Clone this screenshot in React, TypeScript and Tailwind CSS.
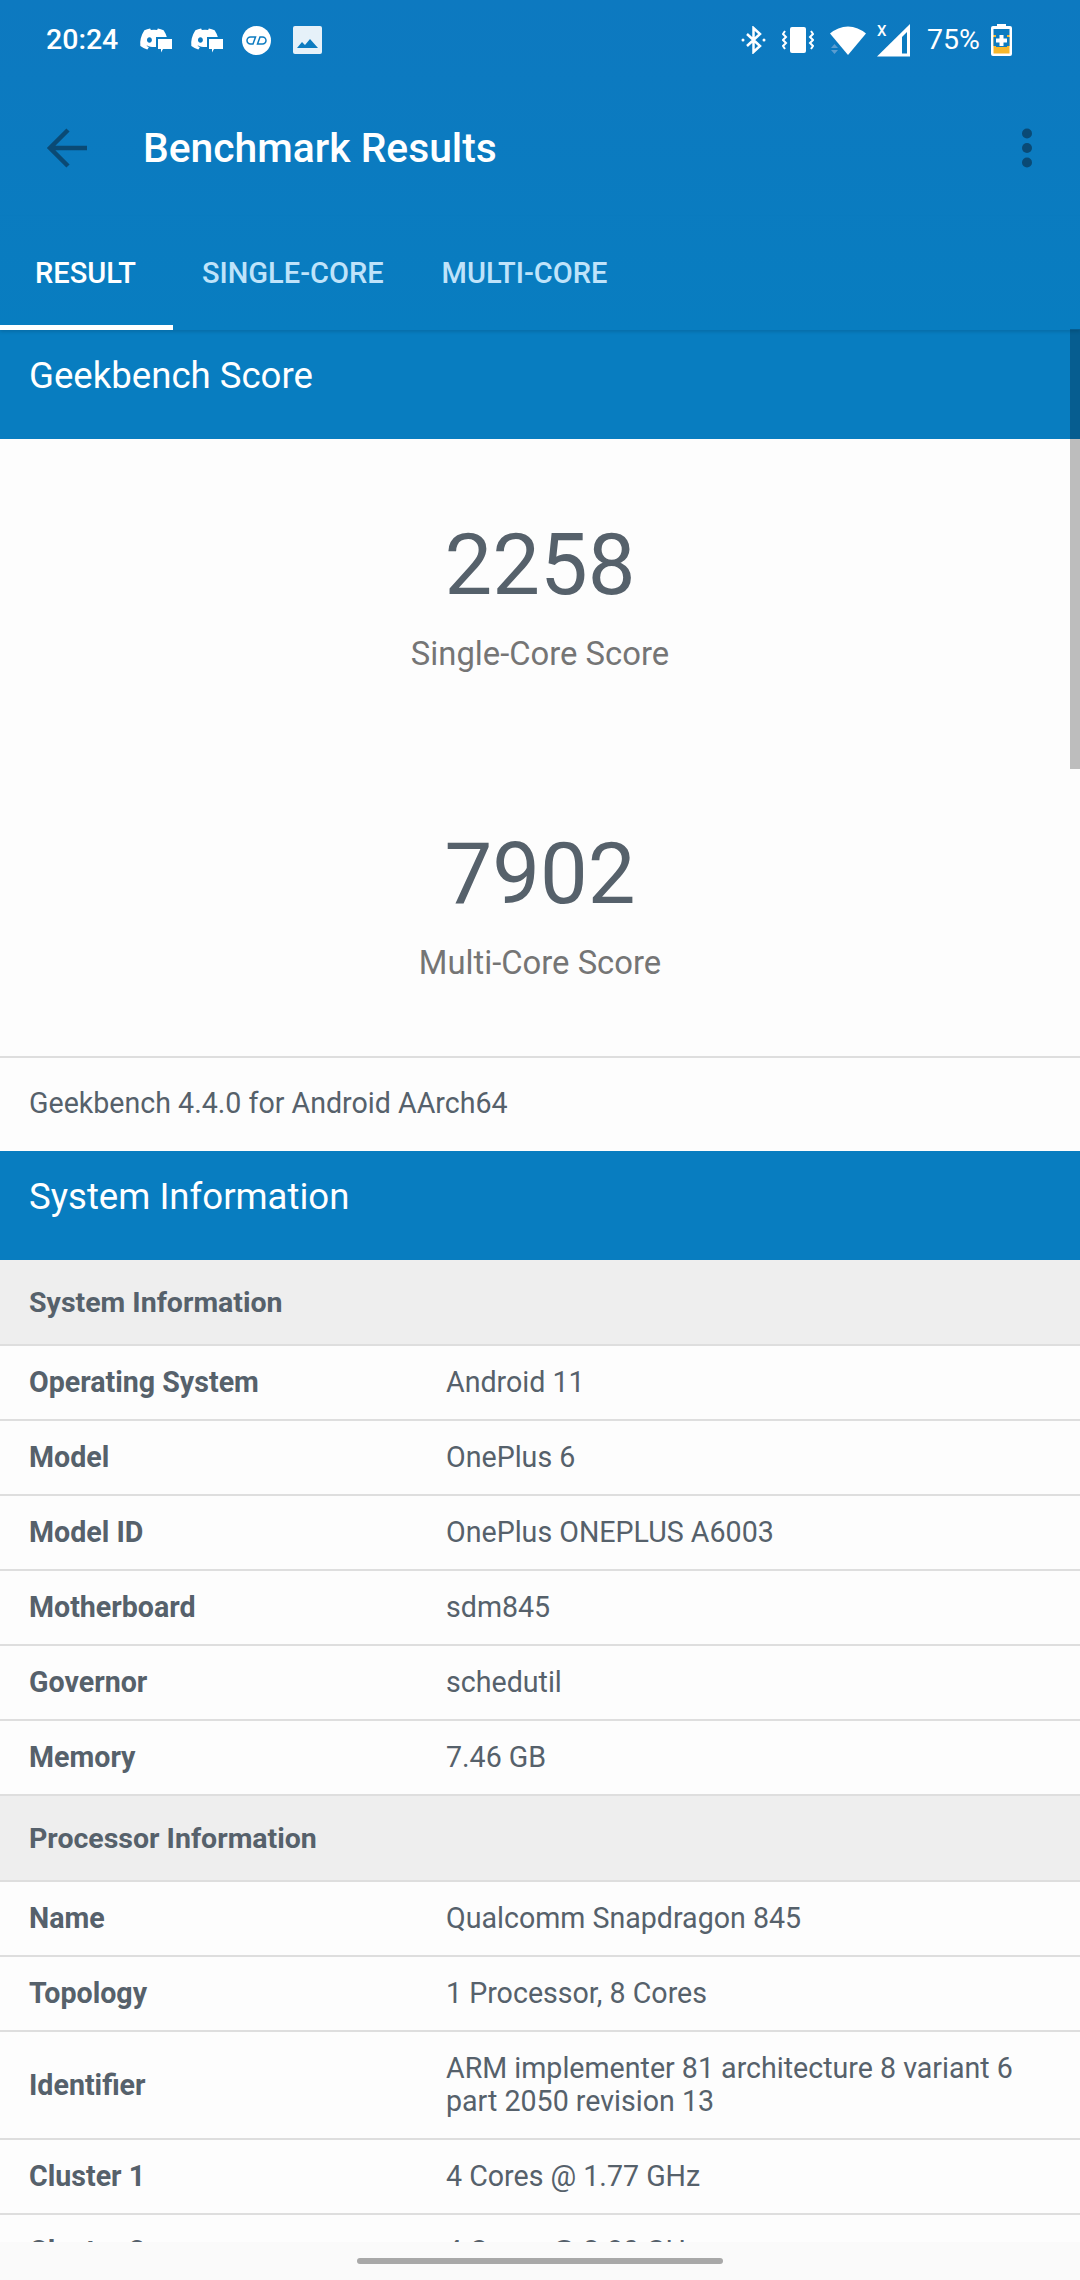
import { FaDiscord } from "react-icons/fa";

const font = { fontFamily: "Roboto, sans-serif" };

interface InfoRow {
  label: string;
  value: string;
}

const systemRows: InfoRow[] = [
  { label: "Operating System", value: "Android 11" },
  { label: "Model", value: "OnePlus 6" },
  { label: "Model ID", value: "OnePlus ONEPLUS A6003" },
  { label: "Motherboard", value: "sdm845" },
  { label: "Governor", value: "schedutil" },
  { label: "Memory", value: "7.46 GB" },
];

const processorRows: InfoRow[] = [
  { label: "Name", value: "Qualcomm Snapdragon 845" },
  { label: "Topology", value: "1 Processor, 8 Cores" },
  {
    label: "Identifier",
    value: "ARM implementer 81 architecture 8 variant 6 part 2050 revision 13",
  },
  { label: "Cluster 1", value: "4 Cores @ 1.77 GHz" },
  { label: "Cluster 2", value: "4 Cores @ 2.80 GHz" },
];

function DiscordChat() {
  return (
    <div className="relative w-[33px] h-[26px]">
      <FaDiscord className="absolute left-0 top-[-3px] text-white text-[30px]" />
      <svg className="absolute right-0 bottom-0" width="17" height="16" viewBox="0 0 17 16">
        <path d="M1 0h16v13H7l-1 3H1z" fill="#0c7bc0" />
        <path d="M3 2h14v10H8l-2 3.500V12H3z" fill="#fff" />
      </svg>
    </div>
  );
}

function LeftIcons() {
  return (
    <div className="flex items-center">
      <DiscordChat />
      <div className="ml-[18px]">
        <DiscordChat />
      </div>
      <svg className="ml-[19px]" width="29" height="29" viewBox="0 0 29 29">
        <circle cx="14.500" cy="14.500" r="14.500" fill="#fff" />
        <path
          d="M8.500 11h5l-2.500 7H8.500a3.500 3.500 0 0 1 0-7zM15.500 18l2.500-7h2.500a3.500 3.500 0 0 1 0 7z"
          fill="none"
          stroke="#0c7bc0"
          strokeWidth="1.500"
        />
      </svg>
      <svg className="ml-[22px]" width="29" height="28" viewBox="0 0 29 28">
        <rect width="29" height="28" rx="2" fill="#e6f1f9" />
        <path d="M4 22l5-6 3 3 5-6 8 9z" fill="#0c7bc0" />
      </svg>
    </div>
  );
}

function RightIcons() {
  return (
    <div className="flex items-center">
      <svg width="25" height="28" viewBox="0 0 25 28" fill="none" stroke="#fff" strokeWidth="2.500">
        <path d="M6 8l13 12-6.500 6V2L19 8 6 20" />
        <circle cx="2" cy="14" r="1.500" fill="#fff" stroke="none" />
        <circle cx="23" cy="14" r="1.500" fill="#fff" stroke="none" />
      </svg>
      <svg className="ml-[16px]" width="32" height="26" viewBox="0 0 32 26">
        <rect x="8" y="0" width="16" height="26" rx="2" fill="#fff" />
        <path
          d="M3 4L1 7l3 3-3 3 3 3-3 3 2 3M29 4l2 3-3 3 3 3-3 3 3 3-2 3"
          fill="none"
          stroke="#fff"
          strokeWidth="2"
        />
      </svg>
      <svg className="ml-[16px]" width="36" height="31" viewBox="0 0 36 31">
        <path d="M0 8.500a27 27 0 0 1 36 0L18 30z" fill="#fff" />
        <path d="M1 23l3.500-4 3.500 4zM1 25l3.500 4 3.500-4z" fill="#5b9dd0" />
      </svg>
      <div className="relative ml-[11px] w-[33px] h-[33px]">
        <svg className="absolute inset-0" width="33" height="33" viewBox="0 0 33 33">
          <path d="M0 32.500L33 0v32.500z" fill="#fff" />
          <path d="M25 13l5-5v21.500h-5z" fill="#0b7bc0" />
        </svg>
        <span className="absolute left-0 top-0 text-[15px] leading-[15px] font-medium text-white">X</span>
      </div>
      <span className="ml-[17px] text-[28.5px] leading-none">75%</span>
      <svg className="ml-[11px]" width="21" height="32" viewBox="0 0 21 32">
        <path d="M6 0h9v2h4a2 2 0 0 1 2 2v26a2 2 0 0 1-2 2H2a2 2 0 0 1-2-2V4a2 2 0 0 1 2-2h4z" fill="#fff" />
        <rect x="2.500" y="5" width="16" height="6" fill="#0c7bc0" />
        <rect x="2.500" y="11" width="16" height="18.500" fill="#f6b72c" />
        <rect x="2.500" y="13" width="16" height="9" fill="#0c7bc0" />
        <rect x="5" y="10" width="11" height="13" fill="#0c7bc0" />
        <path d="M8.500 11h4v3.500H16v4h-3.500V22h-4v-3.500H5v-4h3.500z" fill="#fff" />
      </svg>
    </div>
  );
}

function StatusBar() {
  return (
    <div className="h-[80px] flex items-center justify-between pl-[46px] pr-[68px] text-white">
      <div className="flex items-center">
        <span className="text-[28.5px] font-medium leading-none w-[93px]">20:24</span>
        <LeftIcons />
      </div>
      <RightIcons />
    </div>
  );
}

function AppBar() {
  return (
    <div className="h-[136px] flex items-center justify-between pl-[46px] pr-[48px]">
      <div className="flex items-center">
        <svg width="41" height="40" viewBox="0 0 41 40" fill="none" stroke="#0a4a75" strokeWidth="4.500">
          <path d="M41 20H4M22 2L4 20l18 18" />
        </svg>
        <h1 className="ml-[56px] text-[40.800px] font-medium leading-none text-white">Benchmark Results</h1>
      </div>
      <svg width="10" height="40" viewBox="0 0 10 40" fill="#0a4a75">
        <circle cx="5" cy="5.500" r="5" />
        <circle cx="5" cy="20" r="5" />
        <circle cx="5" cy="34.500" r="5" />
      </svg>
    </div>
  );
}

function Tabs() {
  return (
    <div className="h-[114px] flex text-[29px] font-medium leading-none shadow-[0_2px_3px_rgba(0,0,0,0.12)] relative z-10">
      <div className="w-[173px] flex items-center justify-center text-white border-b-[5px] border-white">
        <span className="mt-[5px] mr-[2px]">RESULT</span>
      </div>
      <div className="px-[29px] flex items-center text-[#bfe3fa]">SINGLE-CORE</div>
      <div className="px-[29px] flex items-center text-[#bfe3fa]">MULTI-CORE</div>
    </div>
  );
}

function SectionHeader({ title }: { title: string }) {
  return (
    <div className="h-[109px] bg-[#087dc0] pl-[29px] pt-[25px] text-[36.600px] leading-[42px] text-white">
      {title}
    </div>
  );
}

function Score({ value, label }: { value: string; label: string }) {
  return (
    <div className="flex flex-col items-center pt-[78px] pb-[73px]">
      <div className="text-[85px] leading-[96px] text-[#56616b]">{value}</div>
      <div className="text-[32.800px] leading-[40px] mt-[21px] text-[#757575]">{label}</div>
    </div>
  );
}

function GroupHeader({ title }: { title: string }) {
  return (
    <div className="h-[86px] bg-[#eeeeee] border-b-2 border-[#dedede] pl-[29px] pt-[2px] flex items-center text-[28.500px] font-bold text-[#56616b]">
      {title}
    </div>
  );
}

function Row({ label, value }: InfoRow) {
  return (
    <div className="flex items-center border-b-2 border-[#dedede] pl-[29px] pr-[29px] py-[20px] text-[28.600px] leading-[33px] text-[#56616b]">
      <div className="w-[417px] shrink-0 font-bold">{label}</div>
      <div className="flex-1">{value}</div>
    </div>
  );
}

export default function App() {
  return (
    <div className="relative w-[1080px] h-[2280px] overflow-hidden bg-[#fdfdfd]" style={font}>
      <div className="bg-gradient-to-b from-[#0d79c0] to-[#087dc0]">
        <StatusBar />
        <AppBar />
        <Tabs />
      </div>
      <SectionHeader title="Geekbench Score" />
      <Score value="2258" label="Single-Core Score" />
      <div className="mt-px">
        <Score value="7902" label="Multi-Core Score" />
      </div>
      <div className="h-[95px] border-t-2 border-[#dedede] pl-[29px] pb-[2px] flex items-center text-[28.600px] text-[#56616b]">
        Geekbench 4.4.0 for Android AArch64
      </div>
      <SectionHeader title="System Information" />
      <GroupHeader title="System Information" />
      {systemRows.map((row) => (
        <Row key={row.label} {...row} />
      ))}
      <GroupHeader title="Processor Information" />
      {processorRows.map((row) => (
        <Row key={row.label} {...row} />
      ))}

      {/* overlay scrollbar */}
      <div className="absolute right-0 top-[329px] w-[10px] h-[440px] bg-[rgba(0,0,0,0.25)]" />

      {/* gesture bar */}
      <div className="absolute left-0 bottom-0 w-full h-[38px] bg-[#fafafa] flex justify-center pt-[16px]">
        <div className="w-[366px] h-[6px] rounded-full bg-[#a8a8a8]" />
      </div>
    </div>
  );
}
